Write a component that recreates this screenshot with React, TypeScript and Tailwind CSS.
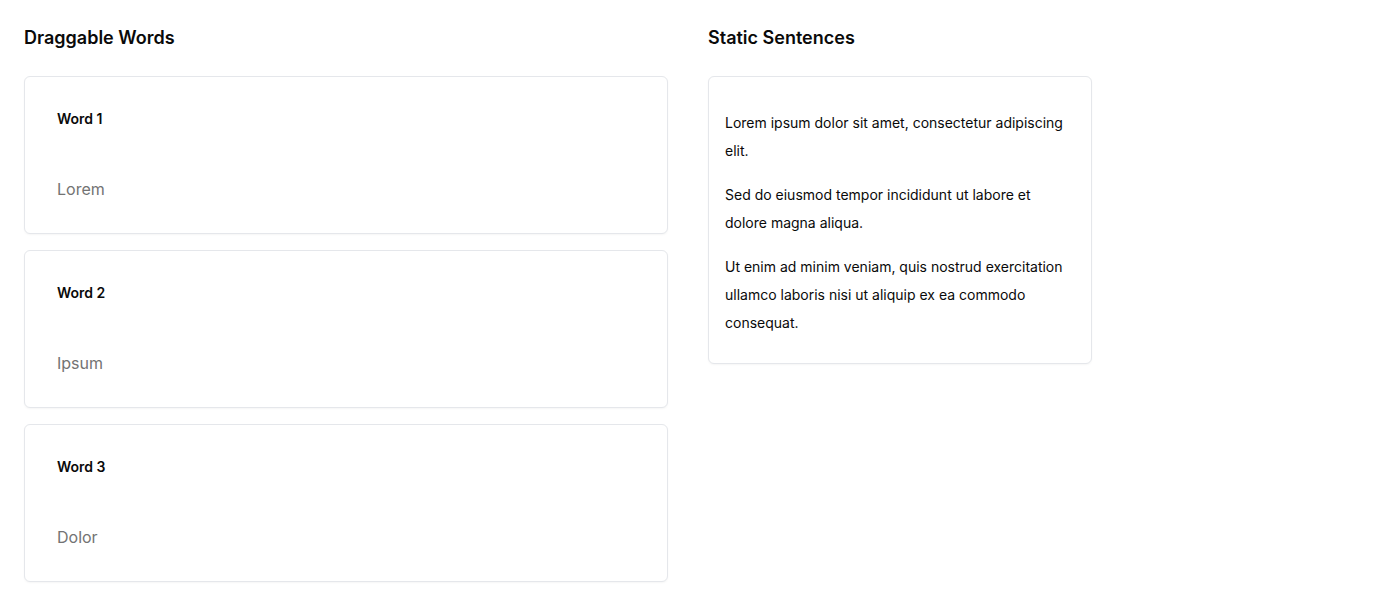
import React from "react";

const words = [
  { title: "Word 1", word: "Lorem" },
  { title: "Word 2", word: "Ipsum" },
  { title: "Word 3", word: "Dolor" },
];

export default function App() {
  return (
    <div
      className="min-h-[606px] bg-white p-6 text-[#0a0a0a]"
      style={{ fontFamily: "Inter, 'Noto Sans', sans-serif" }}
    >
      <div className="grid grid-cols-2 gap-10">
        <div>
          <h2 className="text-lg font-semibold leading-7 mb-6">Draggable Words</h2>
          <div className="flex flex-col gap-4">
            {words.map((w) => (
              <div
                key={w.title}
                className="rounded-md border border-[#e5e7eb] bg-white px-8 py-8 shadow-[0_1px_2px_rgba(0,0,0,0.04)]"
              >
                <div className="text-sm font-semibold leading-5">{w.title}</div>
                <div className="mt-12 text-base leading-6 text-[#737373]">{w.word}</div>
              </div>
            ))}
          </div>
        </div>
        <div>
          <h2 className="text-lg font-semibold leading-7 mb-6">Static Sentences</h2>
          <div className="w-96 rounded-md border border-[#e5e7eb] bg-white px-4 pt-8 pb-[26px] text-sm leading-7 shadow-[0_1px_2px_rgba(0,0,0,0.04)]">
            <p>Lorem ipsum dolor sit amet, consectetur adipiscing elit.</p>
            <p className="mt-4">Sed do eiusmod tempor incididunt ut labore et dolore magna aliqua.</p>
            <p className="mt-4">
              Ut enim ad minim veniam, quis nostrud exercitation ullamco laboris nisi ut aliquip ex ea commodo consequat.
            </p>
          </div>
        </div>
      </div>
    </div>
  );
}
